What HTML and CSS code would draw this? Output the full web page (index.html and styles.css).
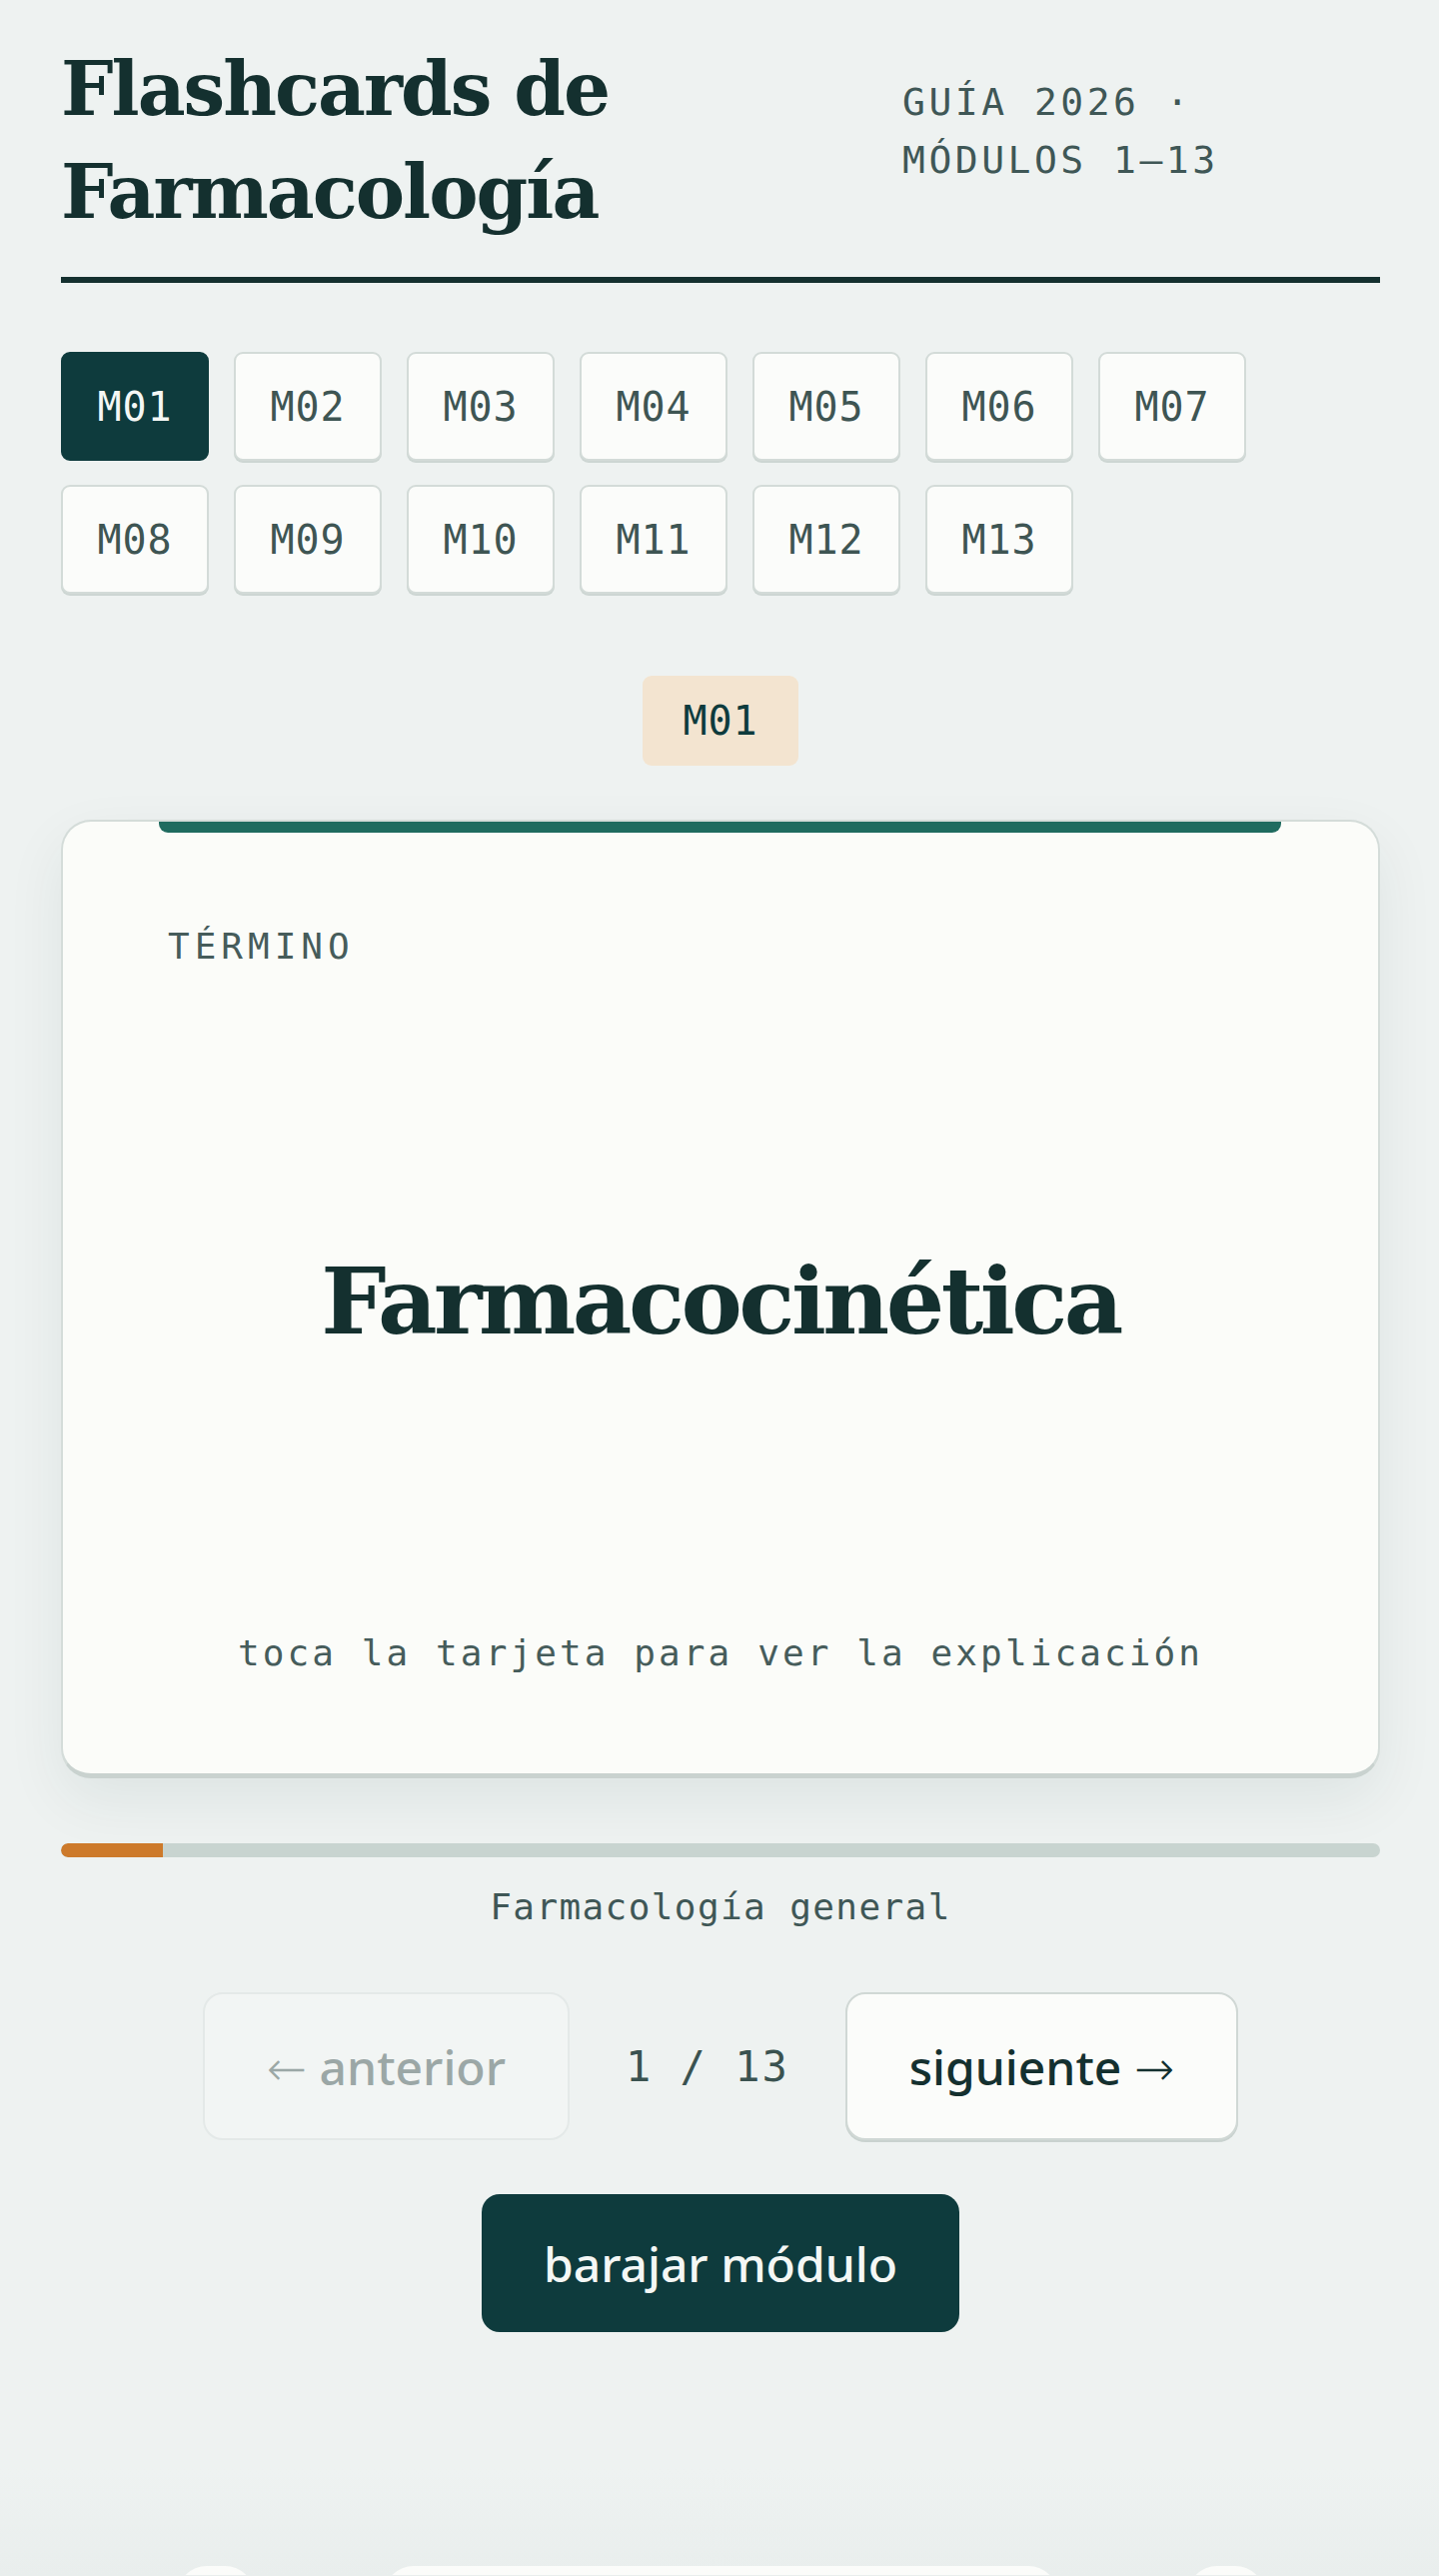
FILE: index.html
```html
<!DOCTYPE html>
<html lang="es">
<head>
<meta charset="utf-8">
<title>Flashcards de Farmacología</title>
<link rel="stylesheet" href="styles.css">
</head>
<body>
<main class="page">
  <header class="header">
    <h1 class="title">Flashcards de Farmacología</h1>
    <p class="meta">GUÍA 2026 · MÓDULOS 1–13</p>
  </header>

  <nav class="modules">
    <button class="mod active">M01</button>
    <button class="mod">M02</button>
    <button class="mod">M03</button>
    <button class="mod">M04</button>
    <button class="mod">M05</button>
    <button class="mod">M06</button>
    <button class="mod">M07</button>
    <button class="mod">M08</button>
    <button class="mod">M09</button>
    <button class="mod">M10</button>
    <button class="mod">M11</button>
    <button class="mod">M12</button>
    <button class="mod">M13</button>
  </nav>

  <div class="badge">M01</div>

  <section class="card">
    <div class="card-bar"></div>
    <div class="card-body">
      <div class="card-label">TÉRMINO</div>
      <div class="card-term">Farmacocinética</div>
      <div class="card-hint">toca la tarjeta para ver la explicación</div>
    </div>
  </section>

  <div class="progress"><div class="progress-fill" style="width:7.69%"></div></div>
  <div class="section-name">Farmacología general</div>

  <div class="nav">
    <button class="nav-btn disabled"><span class="arrow">←</span> anterior</button>
    <span class="counter">1 / 13</span>
    <button class="nav-btn">siguiente <span class="arrow">→</span></button>
  </div>

  <button class="shuffle">barajar módulo</button>

  <div class="dock">
    <span class="dock-item small"></span>
    <span class="dock-item wide"></span>
    <span class="dock-item small"></span>
  </div>
</main>
</body>
</html>
```

FILE: styles.css
```css
* { box-sizing: border-box; }

html, body {
  margin: 0;
  padding: 0;
}

html {
  background: #eef2f1;
}

body {
  min-height: 2577px;
  background: linear-gradient(to bottom, #eef2f1 0, #eef2f1 2470px, #e9eeed 2577px);
  color: #14302f;
  font-family: "DejaVu Sans Mono", monospace;
}

.page {
  width: 1320px;
  margin: 0 auto;
  padding-top: 38px;
  position: relative;
  left: 1px;
}

/* header */
.header {
  display: flex;
  align-items: baseline;
  padding-bottom: 33px;
  border-bottom: 6px solid #14302f;
}

.title {
  flex: 1;
  margin: 0;
  font-family: "DejaVu Serif", serif;
  font-weight: 700;
  font-size: 74px;
  line-height: 103px;
  letter-spacing: -2px;
  color: #14302f;
}

.meta {
  width: 478px;
  margin: 0;
  font-family: "DejaVu Sans Mono", monospace;
  font-size: 38px;
  line-height: 58px;
  letter-spacing: 3.5px;
  color: #3f5756;
}

/* module buttons */
.modules {
  display: flex;
  flex-wrap: wrap;
  gap: 24px 25px;
  margin-top: 69px;
}

.mod {
  width: 148px;
  height: 109px;
  padding: 0;
  border: 2px solid #d3dbd8;
  border-radius: 9px;
  background: #fbfcfa;
  box-shadow: 0 2px 0 #cdd6d3;
  font-family: "DejaVu Sans Mono", monospace;
  font-size: 40px;
  letter-spacing: 1px;
  color: #3e5553;
}

.mod.active {
  background: #0e3b3d;
  border-color: #0e3b3d;
  box-shadow: none;
  color: #f4f7f5;
}

/* badge */
.badge {
  width: 156px;
  height: 90px;
  margin: 82px auto 0;
  display: flex;
  align-items: center;
  justify-content: center;
  background: #f3e4d0;
  border-radius: 9px;
  font-size: 40px;
  letter-spacing: 1px;
  color: #0e3b3d;
}

/* card */
.card {
  margin-top: 54px;
  background: #fbfcf9;
  border: 2px solid #d4dcd9;
  border-bottom: 5px solid #c9d2cf;
  border-radius: 30px;
  box-shadow: 0 22px 60px rgba(14, 59, 61, 0.07);
}

.card-bar {
  height: 11px;
  margin: 0 97px 0 96px;
  background: #1f6b5f;
  border-radius: 0 0 9px 9px;
}

.card-body {
  padding: 92px 105px 98px;
}

.card-label {
  font-size: 36px;
  line-height: 44px;
  letter-spacing: 5px;
  color: #465c5b;
}

.card-term {
  margin-top: 278px;
  text-align: center;
  font-family: "DejaVu Serif", serif;
  font-weight: 700;
  font-size: 92px;
  line-height: 110px;
  letter-spacing: -3.5px;
  color: #14302f;
}

.card-hint {
  margin-top: 275px;
  text-align: center;
  font-size: 36px;
  line-height: 44px;
  letter-spacing: 3.1px;
  color: #465c5b;
}

/* progress */
.progress {
  margin-top: 65px;
  height: 14px;
  border-radius: 7px;
  background: #c8d4d0;
  overflow: hidden;
}

.progress-fill {
  height: 100%;
  background: #cd7a2b;
  border-radius: 7px 0 0 7px;
}

.section-name {
  margin-top: 28px;
  text-align: center;
  font-size: 36px;
  line-height: 44px;
  letter-spacing: 1.4px;
  color: #3f5756;
}

/* nav */
.nav {
  display: flex;
  justify-content: center;
  align-items: center;
  gap: 56px;
  margin-top: 63px;
}

.nav-btn {
  height: 148px;
  padding: 0 62px;
  border: 2px solid #d0d8d5;
  border-radius: 20px;
  background: #fbfcfa;
  box-shadow: 0 2px 0 #c9d2cf;
  font-family: "Noto Sans", "Open Sans", sans-serif;
  font-weight: 500;
  font-size: 48px;
  color: #14302f;
}

.nav-btn.disabled {
  background: #f2f5f4;
  border-color: #e4e9e8;
  box-shadow: none;
  color: #9ba7a6;
}

.arrow {
  font-family: "DejaVu Sans", sans-serif;
  font-weight: 300;
}

.counter {
  font-size: 42px;
  letter-spacing: 2px;
  color: #3a5250;
}

.shuffle {
  display: block;
  height: 138px;
  margin: 54px auto 0;
  padding: 0 62px;
  border: none;
  border-radius: 18px;
  background: #0e3b3d;
  font-family: "Noto Sans", "Open Sans", sans-serif;
  font-weight: 500;
  font-size: 48px;
  color: #f4f7f5;
}

/* bottom dock peeking in */
.dock {
  display: flex;
  justify-content: center;
  gap: 129px;
  height: 9px;
  margin-top: 234px;
  overflow: hidden;
}

.dock-item {
  display: block;
  height: 60px;
  border-radius: 30px;
  background: #fbfcfa;
  flex: none;
}

.dock-item.small { width: 78px; }
.dock-item.wide { width: 675px; }
```
